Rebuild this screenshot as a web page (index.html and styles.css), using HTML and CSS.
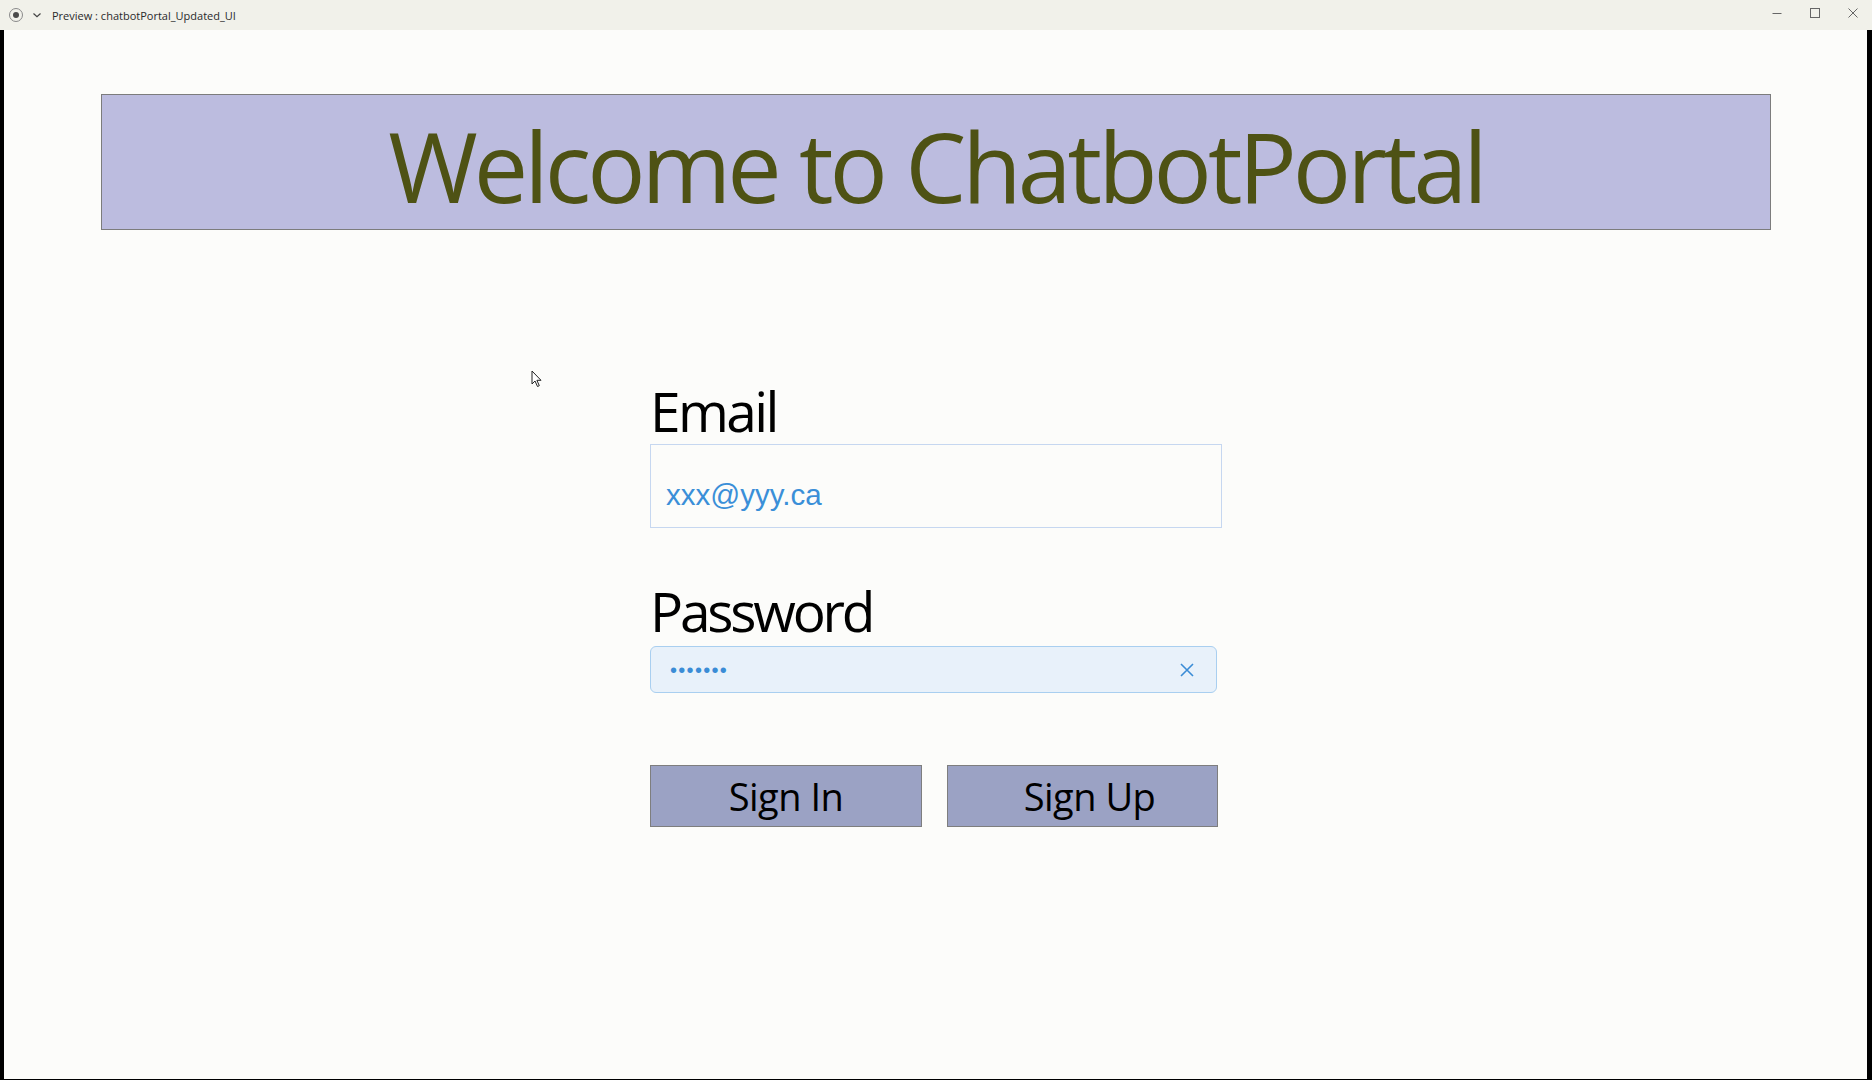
FILE: index.html
```html
<!DOCTYPE html>
<html lang="en">
<head>
<meta charset="utf-8">
<title>Preview : chatbotPortal_Updated_UI</title>
<link rel="stylesheet" href="styles.css">
</head>
<body>
<div class="window">
  <header class="titlebar">
    <svg class="app-icon" width="16" height="16" viewBox="0 0 16 16">
      <circle cx="8" cy="8" r="6.5" fill="none" stroke="#8a8a8a" stroke-width="1"/>
      <circle cx="8" cy="8" r="3" fill="#4a4a4a"/>
    </svg>
    <svg class="chev" width="10" height="8" viewBox="0 0 10 8">
      <path d="M1.5 2.5 L5 5.8 L8.5 2.5" fill="none" stroke="#444" stroke-width="1.2"/>
    </svg>
    <span class="title">Preview : chatbotPortal_Updated_UI</span>
    <div class="controls">
      <span class="ctl"><svg width="10" height="10" viewBox="0 0 10 10"><path d="M0.5 5.5 H9.5" stroke="#666" stroke-width="1"/></svg></span>
      <span class="ctl"><svg width="10" height="10" viewBox="0 0 10 10"><rect x="0.5" y="0.5" width="9" height="9" fill="none" stroke="#666" stroke-width="1"/></svg></span>
      <span class="ctl"><svg width="10" height="10" viewBox="0 0 10 10"><path d="M0.5 0.5 L9.5 9.5 M9.5 0.5 L0.5 9.5" stroke="#666" stroke-width="1"/></svg></span>
    </div>
  </header>
  <main class="content">
    <div class="banner"><h1 class="banner-text">Welcome to ChatbotPortal</h1></div>
    <form class="login">
      <label class="field-label">Email</label>
      <div class="email-box"><span class="email-value">xxx@yyy.ca</span></div>
      <label class="field-label pw-label">Password</label>
      <div class="pw-box">
        <span class="pw-dots">•••••••</span>
        <svg class="clear" width="14" height="14" viewBox="0 0 14 14">
          <path d="M1 1 L13 13 M13 1 L1 13" stroke="#3a8cd6" stroke-width="1.6" fill="none"/>
        </svg>
      </div>
      <div class="actions">
        <button type="button" class="btn">Sign In</button>
        <button type="button" class="btn">Sign Up</button>
      </div>
    </form>
    <svg class="cursor" width="12" height="18" viewBox="0 0 12 18">
      <path d="M1 1 L1 14 L4 11 L6.5 16.5 L8.3 15.7 L5.9 10.3 L10 10.3 Z" fill="#fff" stroke="#222" stroke-width="1" stroke-linejoin="round"/>
    </svg>
  </main>
</div>
</body>
</html>
```
FILE: styles.css
```css
html, body {
  margin: 0;
  padding: 0;
}
body {
  width: 1872px;
  height: 1080px;
  overflow: hidden;
  font-family: "Open Sans", "Noto Sans", sans-serif;
}
.window {
  width: 1872px;
  height: 1080px;
  display: flex;
  flex-direction: column;
  background: #fcfcfa;
}
.titlebar {
  height: 30px;
  flex: none;
  display: flex;
  align-items: center;
  background: #f1f1ea;
  box-sizing: border-box;
  padding-left: 8px;
}
.app-icon {
  flex: none;
}
.chev {
  flex: none;
  margin-left: 8px;
}
.title {
  margin-left: 10px;
  font-size: 11px;
  color: #2a2a2a;
  white-space: nowrap;
}
.controls {
  margin-left: auto;
  display: flex;
  height: 100%;
}
.ctl {
  width: 38px;
  display: flex;
  align-items: center;
  justify-content: center;
  padding-bottom: 4px;
  box-sizing: border-box;
}
.content {
  position: relative;
  flex: 1;
  border-left: 4px solid #000;
  border-right: 5px solid #000;
  border-bottom: 1px solid #000;
  padding: 64px 96px 0 97px;
  background: #fcfcfa;
}
.banner {
  height: 136px;
  box-sizing: border-box;
  border: 1px solid #7c7c7c;
  background: #bcbcdf;
  display: flex;
  align-items: center;
  justify-content: center;
  padding-top: 7px;
}
.banner-text {
  margin: 0;
  font-weight: 400;
  font-size: 97px;
  line-height: 1;
  color: #4e5214;
  letter-spacing: -4px;
  white-space: nowrap;
}
.login {
  margin: 153px 0 0 549px;
  width: 572px;
  display: flex;
  flex-direction: column;
}
.field-label {
  font-size: 55px;
  line-height: 1;
  height: 55px;
  color: #000;
  white-space: nowrap;
  letter-spacing: -2.6px;
}
.email-box {
  margin-top: 6px;
  height: 84px;
  width: 572px;
  box-sizing: border-box;
  border: 1px solid #c6d7f0;
  padding: 35px 0 0 15px;
}
.email-value {
  display: block;
  font-family: "Liberation Sans", Arial, sans-serif;
  font-size: 29.5px;
  line-height: 1;
  color: #3a8fd8;
}
.pw-label {
  margin-top: 55px;
  letter-spacing: -3.2px;
}
.pw-box {
  margin-top: 8px;
  width: 567px;
  height: 47px;
  box-sizing: border-box;
  border: 1px solid #a9cff0;
  border-radius: 6px;
  background: #e8f1fa;
  display: flex;
  align-items: center;
  padding: 0 22px 0 19px;
}
.pw-dots {
  font-family: "Liberation Sans", Arial, sans-serif;
  font-size: 20px;
  line-height: 1;
  letter-spacing: 1.3px;
  color: #3a8cd6;
}
.clear {
  margin-left: auto;
  flex: none;
}
.actions {
  margin-top: 72px;
  display: flex;
  gap: 25px;
}
.btn {
  width: 272px;
  height: 62px;
  box-sizing: border-box;
  border: 1px solid #7e7e7e;
  background: #9ba2c4;
  font-family: "Open Sans", "Noto Sans", sans-serif;
  font-size: 38px;
  line-height: 1;
  color: #000;
  padding: 0;
  margin: 0;
  border-radius: 0;
  letter-spacing: -0.5px;
}
.btn + .btn {
  width: 271px;
  padding-left: 14px;
}
.cursor {
  position: absolute;
  left: 527px;
  top: 340px;
}
```
